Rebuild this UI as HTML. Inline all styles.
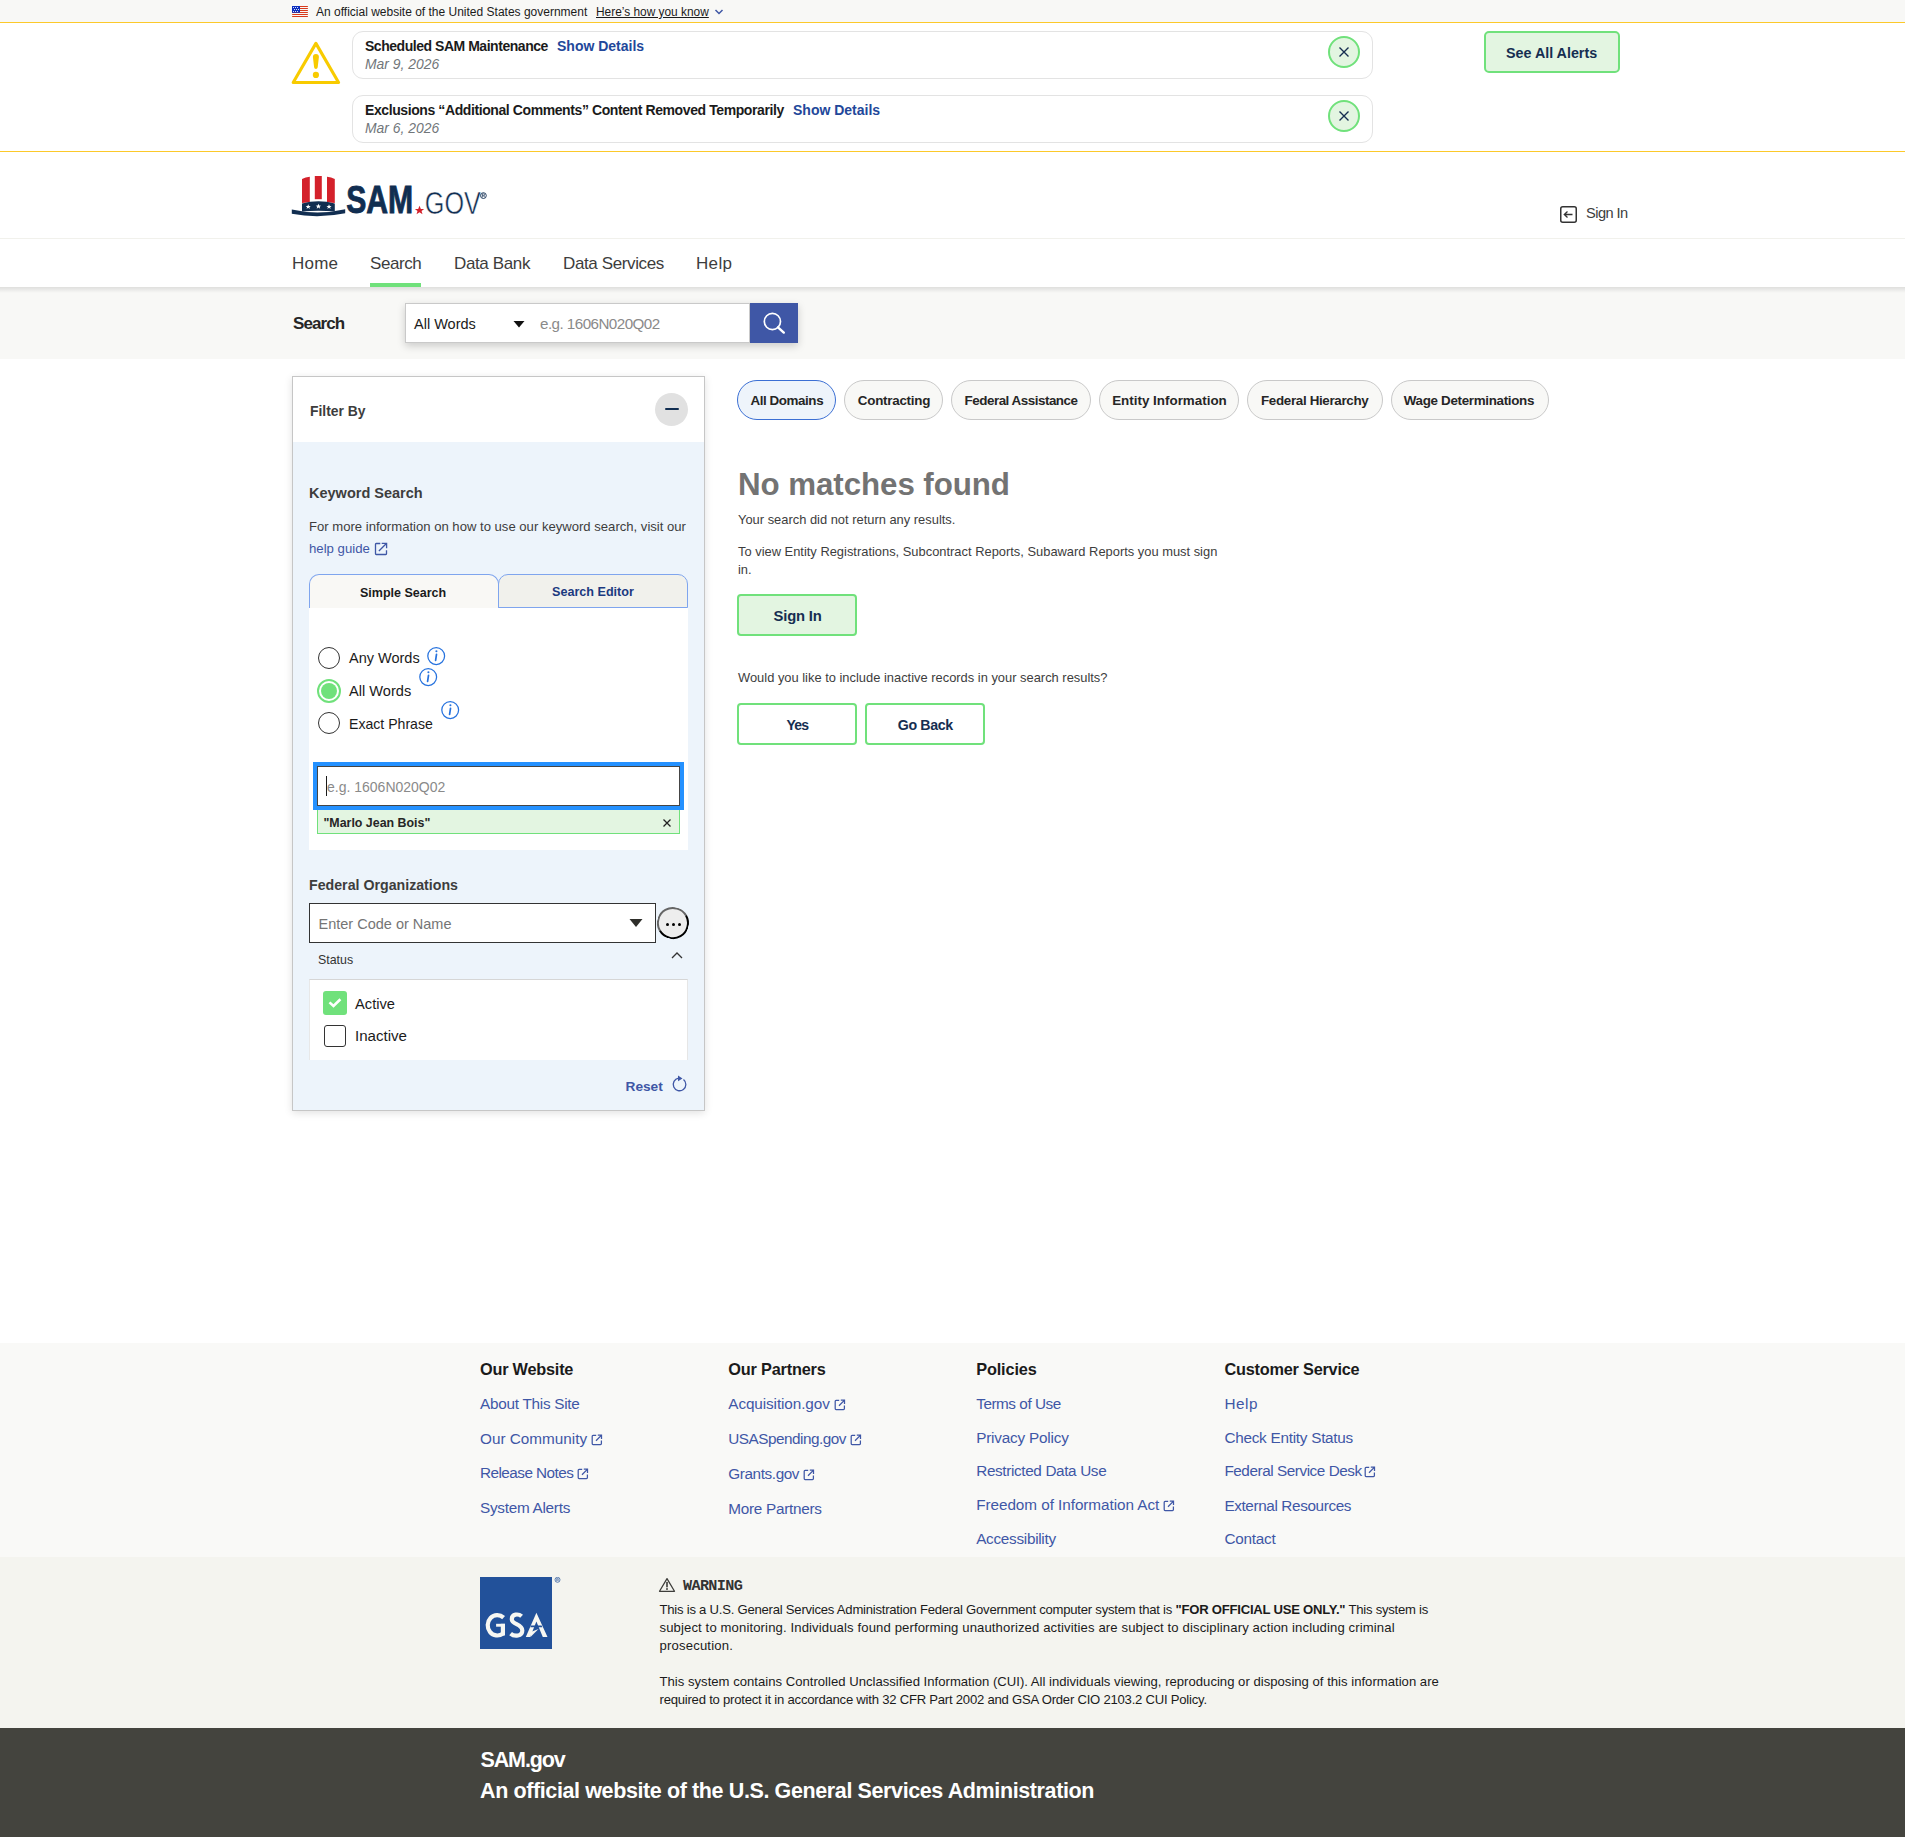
<!DOCTYPE html>
<html><head><meta charset="utf-8"><title>Search | SAM.gov</title>
<style>
html,body{margin:0;padding:0;}
body{width:1905px;height:1837px;position:relative;overflow:hidden;background:#fff;font-family:"Liberation Sans",sans-serif;color:#1b1b1b;}
.t{position:absolute;white-space:nowrap;}
.r{position:absolute;}
b{font-weight:700;}
</style></head><body>
<div class="r" style="left:0px;top:0px;width:1905px;height:22px;background:#f8f8f6"></div>
<div class="r" style="left:0px;top:22px;width:1905px;height:1px;background:#fcc92a"></div>
<svg class="r" style="left:292px;top:5px" width="16" height="13" viewBox="0 0 16 13"><rect x="0" y="1" width="16" height="1.1" rx="0.5" fill="#d83a1c"/><rect x="0" y="3" width="16" height="1.1" rx="0.5" fill="#d83a1c"/><rect x="0" y="5" width="16" height="1.1" rx="0.5" fill="#d83a1c"/><rect x="0" y="7" width="16" height="1.1" rx="0.5" fill="#d83a1c"/><rect x="0" y="9" width="16" height="1.1" rx="0.5" fill="#d83a1c"/><rect x="0" y="11" width="16" height="1.1" rx="0.5" fill="#d83a1c"/><rect x="0" y="0.9" width="8" height="6.9" rx="0.3" fill="#0b2fc0"/><g fill="#fff"><circle cx="1.5" cy="2.5" r="0.55"/><circle cx="3.5" cy="2.5" r="0.55"/><circle cx="5.5" cy="2.5" r="0.55"/><circle cx="2.45" cy="4.5" r="0.55"/><circle cx="4.5" cy="4.5" r="0.55"/><circle cx="6.5" cy="4.5" r="0.55"/><circle cx="1.5" cy="6.45" r="0.55"/><circle cx="3.5" cy="6.45" r="0.55"/><circle cx="5.5" cy="6.45" r="0.55"/></g></svg>
<div class="t" style="left:316.0px;top:6.0px;font-size:12.00px;line-height:12.00px;">An official website of the United States government</div>
<div class="t" style="left:596.0px;top:7.0px;font-size:11.90px;line-height:11.90px;text-decoration:underline;">Here’s how you know</div>
<svg class="r" style="left:714px;top:8px" width="10" height="8" viewBox="0 0 10 8"><path d="M1.5 2 L5 5.5 L8.5 2" fill="none" stroke="#3f57a6" stroke-width="1.5"/></svg>
<div class="r" style="left:0px;top:151px;width:1905px;height:1px;background:#fcc92a"></div>
<svg class="r" style="left:286px;top:36px" width="60" height="54" viewBox="0 0 60 54"><path d="M29.9 7.4 L52.6 46.5 L7.2 46.5 Z" fill="none" stroke="#f8cb00" stroke-width="3.1" stroke-linejoin="round"/><path d="M26.9 21 Q26.9 18 29.9 18 Q32.9 18 32.9 21 L31.7 31.2 Q31.5 32.9 29.9 32.9 Q28.3 32.9 28.1 31.2 Z" fill="#f8cb00"/><circle cx="29.9" cy="38.9" r="3.1" fill="#f8cb00"/></svg>
<div class="r" style="left:352px;top:31px;width:1021px;height:48px;border:1.5px solid #e3e3e3;border-radius:11px;box-sizing:border-box;background:#fff"></div>
<div class="t" style="left:365.0px;top:39.0px;font-size:14.00px;line-height:14.00px;font-weight:700;letter-spacing:-0.465px;" id="f0">Scheduled SAM Maintenance</div>
<div class="t" style="left:557.0px;top:39.0px;font-size:14.00px;line-height:14.00px;font-weight:700;color:#22479a;">Show Details</div>
<div class="t" style="left:365.0px;top:58.0px;font-size:13.90px;line-height:13.90px;color:#71767a;font-style:italic;">Mar 9, 2026</div>
<div class="r" style="left:1328px;top:36px;width:32px;height:32px;border:2px solid #70e17b;border-radius:50%;background:#e3f5e1;box-sizing:border-box"></div>
<svg class="r" style="left:1338px;top:46px" width="12" height="12" viewBox="0 0 12 12"><path d="M1.5 1.5 L10.5 10.5 M10.5 1.5 L1.5 10.5" stroke="#162e51" stroke-width="1.4"/></svg>
<div class="r" style="left:352px;top:95px;width:1021px;height:48px;border:1.5px solid #e3e3e3;border-radius:11px;box-sizing:border-box;background:#fff"></div>
<div class="t" style="left:365.0px;top:103.0px;font-size:14.00px;line-height:14.00px;font-weight:700;letter-spacing:-0.406px;" id="f1">Exclusions “Additional Comments” Content Removed Temporarily</div>
<div class="t" style="left:793.0px;top:103.0px;font-size:14.00px;line-height:14.00px;font-weight:700;color:#22479a;">Show Details</div>
<div class="t" style="left:365.0px;top:122.0px;font-size:13.90px;line-height:13.90px;color:#71767a;font-style:italic;">Mar 6, 2026</div>
<div class="r" style="left:1328px;top:100px;width:32px;height:32px;border:2px solid #70e17b;border-radius:50%;background:#e3f5e1;box-sizing:border-box"></div>
<svg class="r" style="left:1338px;top:110px" width="12" height="12" viewBox="0 0 12 12"><path d="M1.5 1.5 L10.5 10.5 M10.5 1.5 L1.5 10.5" stroke="#162e51" stroke-width="1.4"/></svg>
<div class="r" style="left:1484px;top:31px;width:136px;height:42px;border:2px solid #70e17b;border-radius:5px;background:#e3f5e1;box-sizing:border-box"></div>
<div class="t" style="left:1506.0px;top:46.0px;font-size:14.30px;line-height:14.30px;font-weight:700;color:#162e51;">See All Alerts</div>
<svg class="r" style="left:290px;top:174px" width="200" height="44" viewBox="0 0 200 44"><path d="M12 5 Q15.5 3.3 19.8 2.8 L19.8 28.3 L12 29 Z" fill="#d4212b"/><path d="M24.8 2 L31.8 2 L31.8 25.2 L24.8 25.2 Z" fill="#d4212b"/><path d="M37 2.8 Q41.3 3.3 44.8 5 L44.8 29 L37 28.3 Z" fill="#d4212b"/><path d="M12 29.6 Q28.4 25 44.8 29.6 L44.8 37.6 Q28.4 36 12 37.6 Z" fill="#112e51"/><path d="M1.8 35.5 Q28 41.5 55.2 35.2 L55.2 39.3 Q28 45 1.8 39.8 Z" fill="#112e51"/><g fill="#fff"><path d="M18.2 30.3 l0.75 1.7 1.8 0.05 -1.45 1.1 0.55 1.75 -1.65 -1.05 -1.6 1.05 0.55 -1.75 -1.45 -1.1 1.8 -0.05z"/><path d="M28.4 29.8 l0.8 1.8 1.9 0.05 -1.5 1.15 0.55 1.85 -1.75 -1.1 -1.7 1.1 0.55 -1.85 -1.5 -1.15 1.9 -0.05z"/><path d="M39 30.3 l0.75 1.7 1.8 0.05 -1.45 1.1 0.55 1.75 -1.65 -1.05 -1.6 1.05 0.55 -1.75 -1.45 -1.1 1.8 -0.05z"/></g><text x="56.2" y="39" font-family="Liberation Sans" font-weight="700" font-size="39.5" fill="#112e51" stroke="#112e51" stroke-width="0.9" textLength="67" lengthAdjust="spacingAndGlyphs">SAM</text><path d="M129.5 31.8 l1.35 3.1 3.35 0.1 -2.65 2.05 0.95 3.25 -3 -1.95 -2.95 1.95 0.95 -3.25 -2.65 -2.05 3.35 -0.1z" fill="#d4212b"/><text x="134.8" y="39.5" font-family="Liberation Sans" font-weight="400" font-size="30.7" fill="#112e51" stroke="#fff" stroke-width="0.5" paint-order="normal" textLength="56" lengthAdjust="spacingAndGlyphs">GOV</text><circle cx="193.4" cy="21.6" r="2.9" fill="none" stroke="#112e51" stroke-width="0.9"/><path d="M192.3 23.4 L192.3 19.9 L193.7 19.9 Q194.7 19.9 194.7 20.8 Q194.7 21.7 193.7 21.7 L192.3 21.7 M193.6 21.7 L194.8 23.4" fill="none" stroke="#112e51" stroke-width="0.7"/></svg>
<svg class="r" style="left:1559px;top:205px" width="20" height="20" viewBox="0 0 20 20"><rect x="1.75" y="1.75" width="15.5" height="15.5" rx="2" fill="none" stroke="#333" stroke-width="1.5"/><path d="M13.5 9.5 L5.5 9.5 M8.5 6.5 L5.3 9.5 L8.5 12.5" fill="none" stroke="#333" stroke-width="1.3"/></svg>
<div class="t" style="left:1586.0px;top:206.0px;font-size:14.60px;line-height:14.60px;color:#3d3d3d;letter-spacing:-0.548px;" id="f2">Sign In</div>
<div class="r" style="left:0px;top:238px;width:1905px;height:1px;background:#f1f1ec"></div>
<div class="r" style="left:0px;top:287px;width:1905px;height:72px;background:#f8f8f6"></div>
<div class="r" style="left:0px;top:287px;width:1905px;height:6px;background:linear-gradient(rgba(0,0,0,0.10),rgba(0,0,0,0))"></div>
<div class="t" style="left:292.0px;top:255.0px;font-size:17.00px;line-height:17.00px;color:#3d3d3d;letter-spacing:0.199px;" id="f3">Home</div>
<div class="t" style="left:370.0px;top:255.0px;font-size:17.00px;line-height:17.00px;color:#3d3d3d;letter-spacing:-0.42px;" id="f4">Search</div>
<div class="t" style="left:454.0px;top:255.0px;font-size:17.00px;line-height:17.00px;color:#3d3d3d;letter-spacing:-0.375px;" id="f5">Data Bank</div>
<div class="t" style="left:563.0px;top:255.0px;font-size:17.00px;line-height:17.00px;color:#3d3d3d;letter-spacing:-0.382px;" id="f6">Data Services</div>
<div class="t" style="left:696.0px;top:255.0px;font-size:17.00px;line-height:17.00px;color:#3d3d3d;letter-spacing:0.333px;" id="f7">Help</div>
<div class="r" style="left:370px;top:283px;width:51px;height:4px;background:#70e17b"></div>
<div class="t" style="left:293.0px;top:315.0px;font-size:17.00px;line-height:17.00px;font-weight:700;color:#262626;letter-spacing:-0.9px;" id="f8">Search</div>
<div class="r" style="left:405px;top:303px;width:393px;height:40px;box-shadow:0 3px 8px rgba(0,0,0,0.18)"></div>
<div class="r" style="left:405px;top:303px;width:127px;height:40px;background:#fff;border:1px solid #c9c9c9;box-sizing:border-box"></div>
<div class="t" style="left:414.0px;top:317.0px;font-size:14.50px;line-height:14.50px;">All Words</div>
<svg class="r" style="left:513px;top:320px" width="12" height="8" viewBox="0 0 12 8"><path d="M0.5 1 L11.5 1 L6 7.5 Z" fill="#111"/></svg>
<div class="r" style="left:531px;top:303px;width:219px;height:40px;background:#fff;border:1px solid #c9c9c9;border-left:none;box-sizing:border-box"></div>
<div class="t" style="left:540.0px;top:316.0px;font-size:15.20px;line-height:15.20px;color:#8a8a8a;letter-spacing:-0.545px;" id="f9">e.g. 1606N020Q02</div>
<div class="r" style="left:750px;top:303px;width:48px;height:40px;background:#3f57a6"></div>
<svg class="r" style="left:762px;top:312px" width="24" height="24" viewBox="0 0 24 24"><circle cx="10.4" cy="9.5" r="8.1" fill="none" stroke="#fff" stroke-width="1.7"/><path d="M16 15.3 L21.8 20.6" stroke="#fff" stroke-width="2.4" stroke-linecap="round"/></svg>
<div class="r" style="left:292px;top:376px;width:413px;height:735px;border:1px solid #c6c6c6;box-sizing:border-box;background:#edf4fb;box-shadow:0 2px 8px rgba(0,0,0,0.12)"></div>
<div class="r" style="left:293px;top:377px;width:411px;height:65px;background:#fff"></div>
<div class="t" style="left:310.0px;top:405.0px;font-size:13.90px;line-height:13.90px;font-weight:700;color:#3d3d3d;">Filter By</div>
<div class="r" style="left:655px;top:393px;width:33px;height:33px;background:#e1e1e1;border-radius:50%"></div>
<div class="r" style="left:665px;top:408px;width:14px;height:2px;background:#112e51;border-radius:1px"></div>
<div class="t" style="left:309.0px;top:486.0px;font-size:14.50px;line-height:14.50px;font-weight:700;color:#3d3d3d;">Keyword Search</div>
<div class="t" style="left:309.0px;top:520.0px;font-size:13.10px;line-height:13.10px;color:#3d3d3d;">For more information on how to use our keyword search, visit our</div>
<div class="t" style="left:309.0px;top:542.0px;font-size:13.20px;line-height:13.20px;color:#3f57a6;">help guide</div>
<svg class="r" style="left:374px;top:542px" width="14" height="14" viewBox="0 0 14 14"><path d="M6.3 1.5 L2.2 1.5 Q1.5 1.5 1.5 2.2 L1.5 11.8 Q1.5 12.5 2.2 12.5 L11.8 12.5 Q12.5 12.5 12.5 11.8 L12.5 8.2" fill="none" stroke="#3f57a6" stroke-width="1.3"/><path d="M7.7 1.3 L12.6 1.3 L12.6 6.2 M12.4 1.5 L4.9 9" fill="none" stroke="#3f57a6" stroke-width="1.3"/></svg>
<div class="r" style="left:309px;top:574px;width:190px;height:35px;background:#f9f8f5;border:1px solid #7fa5ee;border-bottom:none;border-radius:10px 10px 0 0;box-sizing:border-box"></div>
<div class="r" style="left:498px;top:574px;width:190px;height:34px;background:#f1f1ec;border:1px solid #7fa5ee;border-radius:10px 10px 0 0;box-sizing:border-box"></div>
<div class="t" style="left:360.0px;top:587.0px;font-size:12.50px;line-height:12.50px;font-weight:700;">Simple Search</div>
<div class="t" style="left:552.0px;top:586.0px;font-size:12.60px;line-height:12.60px;font-weight:700;color:#1c3a80;">Search Editor</div>
<div class="r" style="left:309px;top:608px;width:379px;height:242px;background:#fff"></div>
<div class="r" style="left:318px;top:647px;width:22px;height:22px;border:1.6px solid #333;border-radius:50%;box-sizing:border-box"></div>
<div class="r" style="left:317px;top:679px;width:24px;height:24px;border:2px solid #70e17b;border-radius:50%;box-sizing:border-box;background:#fff"></div>
<div class="r" style="left:321px;top:683px;width:16px;height:16px;background:#70e17b;border-radius:50%"></div>
<div class="r" style="left:318px;top:712px;width:22px;height:22px;border:1.6px solid #333;border-radius:50%;box-sizing:border-box"></div>
<div class="t" style="left:349.0px;top:651.0px;font-size:14.50px;line-height:14.50px;">Any Words</div>
<div class="t" style="left:349.0px;top:684.0px;font-size:14.60px;line-height:14.60px;">All Words</div>
<div class="t" style="left:349.0px;top:717.0px;font-size:14.10px;line-height:14.10px;">Exact Phrase</div>
<svg class="r" style="left:426px;top:646px" width="20" height="20" viewBox="0 0 20 20"><circle cx="10.2" cy="10.1" r="8.4" fill="none" stroke="#2672de" stroke-width="1.25"/><path d="M10.5 8.3 L9.6 14.4" stroke="#2672de" stroke-width="1.7" stroke-linecap="round"/><circle cx="10.4" cy="5.3" r="1.05" fill="#2672de"/></svg>
<svg class="r" style="left:418px;top:667px" width="20" height="20" viewBox="0 0 20 20"><circle cx="10.2" cy="10.1" r="8.4" fill="none" stroke="#2672de" stroke-width="1.25"/><path d="M10.5 8.3 L9.6 14.4" stroke="#2672de" stroke-width="1.7" stroke-linecap="round"/><circle cx="10.4" cy="5.3" r="1.05" fill="#2672de"/></svg>
<svg class="r" style="left:440px;top:700px" width="20" height="20" viewBox="0 0 20 20"><circle cx="10.2" cy="10.1" r="8.4" fill="none" stroke="#2672de" stroke-width="1.25"/><path d="M10.5 8.3 L9.6 14.4" stroke="#2672de" stroke-width="1.7" stroke-linecap="round"/><circle cx="10.4" cy="5.3" r="1.05" fill="#2672de"/></svg>
<div class="r" style="left:313px;top:762px;width:371px;height:48px;background:#2491ff"></div>
<div class="r" style="left:317px;top:766px;width:363px;height:40px;background:#fff;border:1px solid #454545;box-sizing:border-box"></div>
<div class="r" style="left:326px;top:776px;width:1px;height:20px;background:#1b1b1b"></div>
<div class="t" style="left:327.0px;top:780.0px;font-size:14.00px;line-height:14.00px;color:#8a8a8a;">e.g. 1606N020Q02</div>
<div class="r" style="left:317px;top:810px;width:363px;height:24px;background:#e3f5e1;border:1px solid #70e17b;border-top:none;box-sizing:border-box"></div>
<div class="t" style="left:323.5px;top:817.0px;font-size:12.40px;line-height:12.40px;font-weight:700;color:#262626;">"Marlo Jean Bois"</div>
<svg class="r" style="left:662px;top:818px" width="10" height="10" viewBox="0 0 10 10"><path d="M1.5 1.5 L8.5 8.5 M8.5 1.5 L1.5 8.5" stroke="#222" stroke-width="1.3"/></svg>
<div class="t" style="left:309.0px;top:878.0px;font-size:14.20px;line-height:14.20px;font-weight:700;color:#3d3d3d;">Federal Organizations</div>
<div class="r" style="left:309px;top:903px;width:347px;height:40px;background:#fff;border:1px solid #333;box-sizing:border-box"></div>
<div class="t" style="left:318.5px;top:917.0px;font-size:14.50px;line-height:14.50px;color:#757575;">Enter Code or Name</div>
<svg class="r" style="left:629px;top:918px" width="14" height="10" viewBox="0 0 14 10"><path d="M0.5 1 L13.5 1 L7 9 Z" fill="#2e2e2a"/></svg>
<div class="r" style="left:656.5px;top:907px;width:31.5px;height:31.5px;background:#ededed;border:2px solid #000;border-top-color:#666;border-left-color:#666;border-radius:50%;box-sizing:border-box;transform:rotate(15deg)"></div>
<div class="r" style="left:665.75px;top:922.6px;width:3.2999999999999545px;height:3.2999999999999545px;background:#000;border-radius:50%"></div>
<div class="r" style="left:671.65px;top:922.6px;width:3.2999999999999545px;height:3.2999999999999545px;background:#000;border-radius:50%"></div>
<div class="r" style="left:677.5500000000001px;top:922.6px;width:3.2999999999999545px;height:3.2999999999999545px;background:#000;border-radius:50%"></div>
<div class="t" style="left:318.0px;top:954.0px;font-size:12.40px;line-height:12.40px;color:#333;">Status</div>
<svg class="r" style="left:670px;top:951px" width="14" height="9" viewBox="0 0 14 9"><path d="M2 7 L7 2 L12 7" fill="none" stroke="#333" stroke-width="1.3"/></svg>
<div class="r" style="left:309px;top:979px;width:379px;height:81px;background:#fff;border-top:1px solid #d6d6d6;border-left:1px solid #e8e8e8;border-right:1px solid #e6e6e6;box-sizing:border-box"></div>
<div class="r" style="left:323px;top:991px;width:24px;height:24px;background:#70e17b;border-radius:3px"></div>
<svg class="r" style="left:326px;top:996px" width="18" height="14" viewBox="0 0 18 14"><path d="M3.5 6.4 L7.5 10 L14.4 3.3" fill="none" stroke="#fff" stroke-width="2.6"/></svg>
<div class="r" style="left:324px;top:1025px;width:22px;height:22px;border:1.8px solid #333;border-radius:3px;box-sizing:border-box;background:#fff"></div>
<div class="t" style="left:355.0px;top:997.0px;font-size:14.70px;line-height:14.70px;">Active</div>
<div class="t" style="left:355.0px;top:1028.0px;font-size:15.10px;line-height:15.10px;">Inactive</div>
<div class="t" style="left:625.5px;top:1080.0px;font-size:13.70px;line-height:13.70px;font-weight:700;color:#3f57a6;">Reset</div>
<svg class="r" style="left:670px;top:1074px" width="18" height="19" viewBox="0 0 18 19"><path d="M13.5 5.5 A6.3 6.3 0 1 1 8.5 4.2" fill="none" stroke="#3f57a6" stroke-width="1.3"/><path d="M8 1.5 L12.5 4.5 L8 7.3 Z" fill="#3f57a6"/></svg>
<div class="r" style="left:737px;top:380px;width:99px;height:40px;background:#eef4fb;border:1.5px solid #3b6fd4;border-radius:20px;box-sizing:border-box"></div>
<div class="t" style="left:750.4px;top:394.0px;font-size:13.40px;line-height:13.40px;font-weight:700;color:#262626;letter-spacing:-0.42px;" id="f10">All Domains</div>
<div class="r" style="left:844px;top:380px;width:99px;height:40px;background:#f8f8f6;border:1px solid #c9c9c9;border-radius:20px;box-sizing:border-box"></div>
<div class="t" style="left:857.8px;top:394.0px;font-size:13.40px;line-height:13.40px;font-weight:700;color:#262626;letter-spacing:-0.26px;" id="f11">Contracting</div>
<div class="r" style="left:951px;top:380px;width:140px;height:40px;background:#f8f8f6;border:1px solid #c9c9c9;border-radius:20px;box-sizing:border-box"></div>
<div class="t" style="left:964.6px;top:394.0px;font-size:13.40px;line-height:13.40px;font-weight:700;color:#262626;letter-spacing:-0.482px;" id="f12">Federal Assistance</div>
<div class="r" style="left:1099px;top:380px;width:140px;height:40px;background:#f8f8f6;border:1px solid #c9c9c9;border-radius:20px;box-sizing:border-box"></div>
<div class="t" style="left:1112.2px;top:394.0px;font-size:13.40px;line-height:13.40px;font-weight:700;color:#262626;" id="f13">Entity Information</div>
<div class="r" style="left:1247px;top:380px;width:136px;height:40px;background:#f8f8f6;border:1px solid #c9c9c9;border-radius:20px;box-sizing:border-box"></div>
<div class="t" style="left:1261.0px;top:394.0px;font-size:13.40px;line-height:13.40px;font-weight:700;color:#262626;letter-spacing:-0.338px;" id="f14">Federal Hierarchy</div>
<div class="r" style="left:1391px;top:380px;width:158px;height:40px;background:#f8f8f6;border:1px solid #c9c9c9;border-radius:20px;box-sizing:border-box"></div>
<div class="t" style="left:1403.8px;top:394.0px;font-size:13.40px;line-height:13.40px;font-weight:700;color:#262626;letter-spacing:-0.322px;" id="f15">Wage Determinations</div>
<div class="t" style="left:738.0px;top:469.0px;font-size:31.30px;line-height:31.30px;font-weight:700;color:#737373;letter-spacing:-0.067px;" id="f16">No matches found</div>
<div class="t" style="left:738.0px;top:514.0px;font-size:12.90px;line-height:12.90px;color:#3d3d3d;">Your search did not return any results.</div>
<div class="t" style="left:738.0px;top:546.0px;font-size:12.90px;line-height:12.90px;color:#3d3d3d;">To view Entity Registrations, Subcontract Reports, Subaward Reports you must sign</div>
<div class="t" style="left:738.0px;top:564.0px;font-size:12.90px;line-height:12.90px;color:#3d3d3d;">in.</div>
<div class="r" style="left:737px;top:594px;width:120px;height:42px;border:2px solid #70e17b;border-radius:4px;background:#e3f5e1;box-sizing:border-box"></div>
<div class="t" style="left:773.6px;top:609.0px;font-size:14.80px;line-height:14.80px;font-weight:700;color:#162e51;letter-spacing:-0.2px;" id="f17">Sign In</div>
<div class="t" style="left:738.0px;top:672.0px;font-size:12.90px;line-height:12.90px;color:#3d3d3d;">Would you like to include inactive records in your search results?</div>
<div class="r" style="left:737px;top:703px;width:120px;height:42px;border:2px solid #70e17b;border-radius:4px;background:#fff;box-sizing:border-box"></div>
<div class="r" style="left:865px;top:703px;width:120px;height:42px;border:2px solid #70e17b;border-radius:4px;background:#fff;box-sizing:border-box"></div>
<div class="t" style="left:786.4px;top:718.0px;font-size:14.00px;line-height:14.00px;font-weight:700;color:#162e51;letter-spacing:-0.7px;" id="f18">Yes</div>
<div class="t" style="left:897.7px;top:718.0px;font-size:14.20px;line-height:14.20px;font-weight:700;color:#162e51;letter-spacing:-0.333px;" id="f19">Go Back</div>
<div class="r" style="left:0px;top:1343px;width:1905px;height:214px;background:#f9f9f7"></div>
<div class="r" style="left:0px;top:1557px;width:1905px;height:171px;background:#f4f4ef"></div>
<div class="r" style="left:0px;top:1728px;width:1905px;height:109px;background:#44443e"></div>
<div class="t" style="left:480.0px;top:1361.0px;font-size:16.30px;line-height:16.30px;font-weight:700;letter-spacing:-0.22px;" id="f20">Our Website</div>
<div class="t" style="left:480.0px;top:1396.0px;font-size:15.30px;line-height:15.30px;color:#3f57a6;letter-spacing:-0.257px;" id="f21">About This Site</div>
<div class="t" style="left:480.0px;top:1431.0px;font-size:15.30px;line-height:15.30px;color:#3f57a6;" id="f22">Our Community</div>
<svg class="r" style="left:590.6px;top:1433.5px" width="12" height="12" viewBox="0 0 12 12"><path d="M5.2 1.3 L2.1 1.3 Q1.2 1.3 1.2 2.2 L1.2 9.6 Q1.2 10.5 2.1 10.5 L9.5 10.5 Q10.4 10.5 10.4 9.6 L10.4 6.6" fill="none" stroke="#3f57a6" stroke-width="1.25"/><path d="M6.8 1.2 L10.5 1.2 L10.5 4.9 M10.3 1.4 L5 6.7" fill="none" stroke="#3f57a6" stroke-width="1.25"/></svg>
<div class="t" style="left:480.0px;top:1465.0px;font-size:15.30px;line-height:15.30px;color:#3f57a6;letter-spacing:-0.534px;" id="f23">Release Notes</div>
<svg class="r" style="left:576.5px;top:1468px" width="12" height="12" viewBox="0 0 12 12"><path d="M5.2 1.3 L2.1 1.3 Q1.2 1.3 1.2 2.2 L1.2 9.6 Q1.2 10.5 2.1 10.5 L9.5 10.5 Q10.4 10.5 10.4 9.6 L10.4 6.6" fill="none" stroke="#3f57a6" stroke-width="1.25"/><path d="M6.8 1.2 L10.5 1.2 L10.5 4.9 M10.3 1.4 L5 6.7" fill="none" stroke="#3f57a6" stroke-width="1.25"/></svg>
<div class="t" style="left:480.0px;top:1500.0px;font-size:15.30px;line-height:15.30px;color:#3f57a6;letter-spacing:-0.267px;" id="f24">System Alerts</div>
<div class="t" style="left:728.3px;top:1361.0px;font-size:16.30px;line-height:16.30px;font-weight:700;letter-spacing:-0.182px;" id="f25">Our Partners</div>
<div class="t" style="left:728.3px;top:1396.0px;font-size:15.30px;line-height:15.30px;color:#3f57a6;letter-spacing:-0.1px;" id="f26">Acquisition.gov</div>
<svg class="r" style="left:834.4px;top:1399.3px" width="12" height="12" viewBox="0 0 12 12"><path d="M5.2 1.3 L2.1 1.3 Q1.2 1.3 1.2 2.2 L1.2 9.6 Q1.2 10.5 2.1 10.5 L9.5 10.5 Q10.4 10.5 10.4 9.6 L10.4 6.6" fill="none" stroke="#3f57a6" stroke-width="1.25"/><path d="M6.8 1.2 L10.5 1.2 L10.5 4.9 M10.3 1.4 L5 6.7" fill="none" stroke="#3f57a6" stroke-width="1.25"/></svg>
<div class="t" style="left:728.3px;top:1431.0px;font-size:15.30px;line-height:15.30px;color:#3f57a6;letter-spacing:-0.486px;" id="f27">USASpending.gov</div>
<svg class="r" style="left:850.2px;top:1433.8px" width="12" height="12" viewBox="0 0 12 12"><path d="M5.2 1.3 L2.1 1.3 Q1.2 1.3 1.2 2.2 L1.2 9.6 Q1.2 10.5 2.1 10.5 L9.5 10.5 Q10.4 10.5 10.4 9.6 L10.4 6.6" fill="none" stroke="#3f57a6" stroke-width="1.25"/><path d="M6.8 1.2 L10.5 1.2 L10.5 4.9 M10.3 1.4 L5 6.7" fill="none" stroke="#3f57a6" stroke-width="1.25"/></svg>
<div class="t" style="left:728.3px;top:1466.0px;font-size:15.30px;line-height:15.30px;color:#3f57a6;letter-spacing:-0.4px;" id="f28">Grants.gov</div>
<svg class="r" style="left:803px;top:1468.7px" width="12" height="12" viewBox="0 0 12 12"><path d="M5.2 1.3 L2.1 1.3 Q1.2 1.3 1.2 2.2 L1.2 9.6 Q1.2 10.5 2.1 10.5 L9.5 10.5 Q10.4 10.5 10.4 9.6 L10.4 6.6" fill="none" stroke="#3f57a6" stroke-width="1.25"/><path d="M6.8 1.2 L10.5 1.2 L10.5 4.9 M10.3 1.4 L5 6.7" fill="none" stroke="#3f57a6" stroke-width="1.25"/></svg>
<div class="t" style="left:728.3px;top:1501.0px;font-size:15.30px;line-height:15.30px;color:#3f57a6;letter-spacing:-0.266px;" id="f29">More Partners</div>
<div class="t" style="left:976.2px;top:1361.0px;font-size:16.30px;line-height:16.30px;font-weight:700;letter-spacing:-0.143px;" id="f30">Policies</div>
<div class="t" style="left:976.2px;top:1396.0px;font-size:15.30px;line-height:15.30px;color:#3f57a6;letter-spacing:-0.455px;" id="f31">Terms of Use</div>
<div class="t" style="left:976.2px;top:1430.0px;font-size:15.30px;line-height:15.30px;color:#3f57a6;letter-spacing:-0.2px;" id="f32">Privacy Policy</div>
<div class="t" style="left:976.2px;top:1463.0px;font-size:15.30px;line-height:15.30px;color:#3f57a6;letter-spacing:-0.356px;" id="f33">Restricted Data Use</div>
<div class="t" style="left:976.2px;top:1497.0px;font-size:15.30px;line-height:15.30px;color:#3f57a6;letter-spacing:-0.056px;" id="f34">Freedom of Information Act</div>
<svg class="r" style="left:1162.8px;top:1500.2px" width="12" height="12" viewBox="0 0 12 12"><path d="M5.2 1.3 L2.1 1.3 Q1.2 1.3 1.2 2.2 L1.2 9.6 Q1.2 10.5 2.1 10.5 L9.5 10.5 Q10.4 10.5 10.4 9.6 L10.4 6.6" fill="none" stroke="#3f57a6" stroke-width="1.25"/><path d="M6.8 1.2 L10.5 1.2 L10.5 4.9 M10.3 1.4 L5 6.7" fill="none" stroke="#3f57a6" stroke-width="1.25"/></svg>
<div class="t" style="left:976.2px;top:1531.0px;font-size:15.30px;line-height:15.30px;color:#3f57a6;letter-spacing:-0.284px;" id="f35">Accessibility</div>
<div class="t" style="left:1224.4px;top:1361.0px;font-size:16.30px;line-height:16.30px;font-weight:700;letter-spacing:-0.213px;" id="f36">Customer Service</div>
<div class="t" style="left:1224.4px;top:1396.0px;font-size:15.30px;line-height:15.30px;color:#3f57a6;letter-spacing:0.533px;" id="f37">Help</div>
<div class="t" style="left:1224.4px;top:1430.0px;font-size:15.30px;line-height:15.30px;color:#3f57a6;letter-spacing:-0.256px;" id="f38">Check Entity Status</div>
<div class="t" style="left:1224.4px;top:1463.0px;font-size:15.30px;line-height:15.30px;color:#3f57a6;letter-spacing:-0.442px;" id="f39">Federal Service Desk</div>
<svg class="r" style="left:1364px;top:1465.8px" width="12" height="12" viewBox="0 0 12 12"><path d="M5.2 1.3 L2.1 1.3 Q1.2 1.3 1.2 2.2 L1.2 9.6 Q1.2 10.5 2.1 10.5 L9.5 10.5 Q10.4 10.5 10.4 9.6 L10.4 6.6" fill="none" stroke="#3f57a6" stroke-width="1.25"/><path d="M6.8 1.2 L10.5 1.2 L10.5 4.9 M10.3 1.4 L5 6.7" fill="none" stroke="#3f57a6" stroke-width="1.25"/></svg>
<div class="t" style="left:1224.4px;top:1498.0px;font-size:15.30px;line-height:15.30px;color:#3f57a6;letter-spacing:-0.377px;" id="f40">External Resources</div>
<div class="t" style="left:1224.4px;top:1531.0px;font-size:15.30px;line-height:15.30px;color:#3f57a6;letter-spacing:-0.234px;" id="f41">Contact</div>
<svg class="r" style="left:480px;top:1577px" width="82" height="72" viewBox="0 0 82 72"><rect width="72" height="72" fill="#22519a"/><g fill="none" stroke="#f7f7f2" stroke-width="4.2"><path d="M23.6 40.6 A9.6 10.2 0 1 0 22.9 56.6"/><path d="M22.9 46.8 L22.9 58.5"/><path d="M41.6 39.3 C38.6 36.6 31.8 36.6 31.8 42.2 C31.8 47.8 42.3 46.4 42.3 53.4 C42.3 59.6 34.2 59.8 30.6 56.6"/></g><rect x="16.1" y="46.8" width="8.9" height="2.9" fill="#f7f7f2"/><path d="M56.4 35.7 L67.5 60 L62.8 60 L56.4 44.5 L50.2 60 L45.8 60 Z" fill="#f7f7f2"/><path d="M50.8 55 L58.5 52 L50.5 60 Z" fill="#f7f7f2"/><path d="M50.3 50.2 L62.4 50.2 L61.6 48.6 L51 48.6 Z" fill="#22519a"/><circle cx="77.5" cy="2.8" r="2.5" fill="none" stroke="#22519a" stroke-width="0.7"/><path d="M76.7 4.2 L76.7 1.5 L77.8 1.5 Q78.5 1.5 78.5 2.2 Q78.5 2.9 77.8 2.9 L76.7 2.9 M77.7 2.9 L78.6 4.2" fill="none" stroke="#22519a" stroke-width="0.55"/></svg>
<svg class="r" style="left:658px;top:1577px" width="18" height="16" viewBox="0 0 18 16"><path d="M9 1.6 L16.5 14.3 L1.5 14.3 Z" fill="none" stroke="#3d3d3a" stroke-width="1.25" stroke-linejoin="round"/><path d="M9 5.5 L9 9.8" stroke="#3d3d3a" stroke-width="1.6" stroke-linecap="round"/><circle cx="9" cy="12" r="0.95" fill="#3d3d3a"/></svg>
<div class="t" style="left:683.0px;top:1579.0px;font-size:15.20px;line-height:15.20px;font-weight:700;color:#333;letter-spacing:-0.667px;font-family:'Liberation Mono',monospace;" id="f42">WARNING</div>
<div class="t" style="left:659.5px;top:1603.0px;font-size:13.10px;line-height:13.10px;letter-spacing:-0.234px;" id="f43">This is a U.S. General Services Administration Federal Government computer system that is <b>"FOR OFFICIAL USE ONLY."</b> This system is</div>
<div class="t" style="left:659.5px;top:1621.0px;font-size:13.10px;line-height:13.10px;letter-spacing:0.125px;" id="f44">subject to monitoring. Individuals found performing unauthorized activities are subject to disciplinary action including criminal</div>
<div class="t" style="left:659.5px;top:1639.0px;font-size:13.10px;line-height:13.10px;letter-spacing:0.182px;" id="f45">prosecution.</div>
<div class="t" style="left:659.5px;top:1675.0px;font-size:13.10px;line-height:13.10px;letter-spacing:0.015px;" id="f46">This system contains Controlled Unclassified Information (CUI). All individuals viewing, reproducing or disposing of this information are</div>
<div class="t" style="left:659.5px;top:1693.0px;font-size:13.10px;line-height:13.10px;letter-spacing:-0.227px;" id="f47">required to protect it in accordance with 32 CFR Part 2002 and GSA Order CIO 2103.2 CUI Policy.</div>
<div class="t" style="left:480.5px;top:1750.0px;font-size:21.50px;line-height:21.50px;font-weight:700;color:#fff;letter-spacing:-1.133px;" id="f48">SAM.gov</div>
<div class="t" style="left:480.0px;top:1781.0px;font-size:21.50px;line-height:21.50px;font-weight:700;color:#fff;letter-spacing:-0.387px;" id="f49">An official website of the U.S. General Services Administration</div>
</body></html>
